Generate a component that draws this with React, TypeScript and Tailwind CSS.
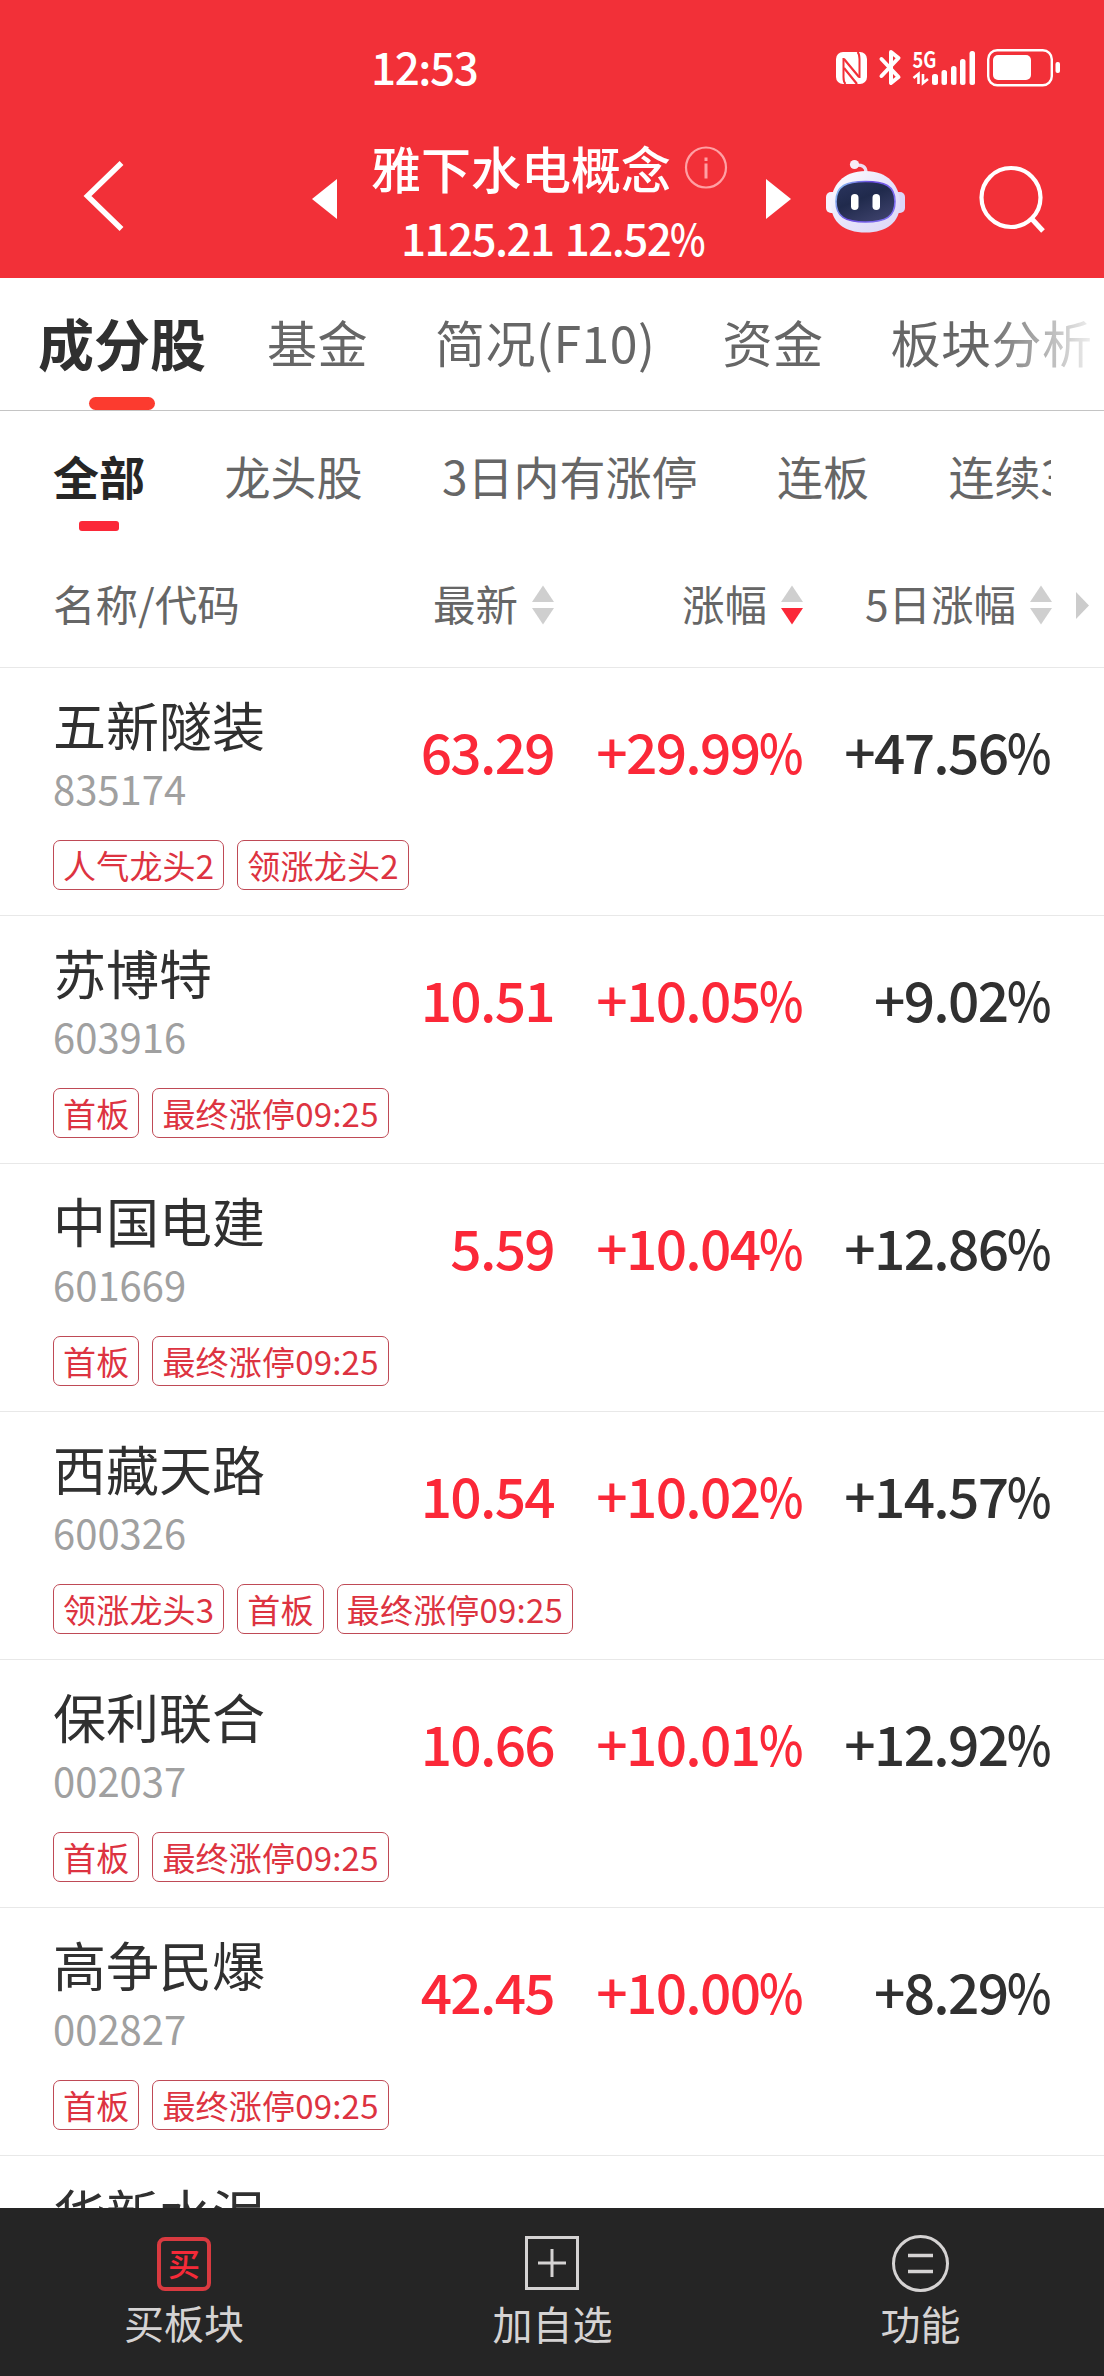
import clsx from "clsx";

type Stock = {
    name: string;
    code: string;
    price: string;
    change: string;
    change5: string;
    tags: string[];
};

const stocks: Stock[] = [
    { name: "五新隧装", code: "835174", price: "63.29", change: "+29.99%", change5: "+47.56%", tags: ["人气龙头2", "领涨龙头2"] },
    { name: "苏博特", code: "603916", price: "10.51", change: "+10.05%", change5: "+9.02%", tags: ["首板", "最终涨停09:25"] },
    { name: "中国电建", code: "601669", price: "5.59", change: "+10.04%", change5: "+12.86%", tags: ["首板", "最终涨停09:25"] },
    { name: "西藏天路", code: "600326", price: "10.54", change: "+10.02%", change5: "+14.57%", tags: ["领涨龙头3", "首板", "最终涨停09:25"] },
    { name: "保利联合", code: "002037", price: "10.66", change: "+10.01%", change5: "+12.92%", tags: ["首板", "最终涨停09:25"] },
    { name: "高争民爆", code: "002827", price: "42.45", change: "+10.00%", change5: "+8.29%", tags: ["首板", "最终涨停09:25"] },
    { name: "华新水泥", code: "", price: "", change: "", change5: "", tags: [] },
];

const tabs = ["基金", "简况(F10)", "资金", "板块分析"];
const filters = ["龙头股", "3日内有涨停", "连板", "连续3日"];

// the percent sign is drawn narrower than the font's own
function Num({ value }: { value: string }) {
    const percent = value.endsWith("%");
    return (
        <span className="whitespace-nowrap">
            {percent ? value.slice(0, -1) : value}
            {percent && <span className="inline-block origin-left scale-x-[0.86] mr-[-0.15em]">%</span>}
        </span>
    );
}

function StatusIcons() {
    return (
        <svg width="228" height="40" viewBox="834 48 228 40" fill="none">
            <rect x="836" y="52" width="31" height="32" rx="7" fill="white" />
            <path d="M843.500 58v19q0 5 2 7M859.500 78V59q0-5-2-7" stroke="#f23038" strokeWidth="2" />
            <path d="M844 59l15 18M844 68l13 16" stroke="#f23038" strokeWidth="2.200" />
            <path d="M881.500 59l17 18-7.500 6V52l7.500 6-17 18" stroke="white" strokeWidth="4" strokeLinejoin="round" strokeLinecap="round" />
            <path d="M913.500 78l5-4v10M928 79l-5 4V74" stroke="white" strokeWidth="2.600" />
            <rect x="932" y="74" width="6" height="11" rx="2.500" fill="white" />
            <rect x="941.500" y="70" width="5.500" height="15" rx="2.500" fill="white" />
            <rect x="951" y="66" width="5.500" height="19" rx="2.500" fill="white" />
            <rect x="960" y="59" width="5.500" height="26" rx="2.500" fill="white" />
            <rect x="969.500" y="51" width="5.500" height="34" rx="2.500" fill="white" />
            <rect x="988.200" y="50.200" width="63.600" height="35" rx="9" stroke="white" strokeWidth="2.400" />
            <rect x="993" y="55" width="38" height="25" rx="5" fill="white" />
            <rect x="1055.500" y="62" width="4.500" height="11" rx="2" fill="white" />
            <text x="912.500" y="67.500" fill="white" fontSize="22" fontWeight="700" textLength="24" lengthAdjust="spacingAndGlyphs">5G</text>
        </svg>
    );
}

function Robot() {
    return (
        <svg width="80" height="76" viewBox="826 159 80 76" fill="none">
            <defs>
                <linearGradient id="head" x1="0" y1="0" x2="1" y2="1">
                    <stop offset="0" stopColor="#ffffff" />
                    <stop offset="0.55" stopColor="#e6e2fa" />
                    <stop offset="1" stopColor="#dcd6f6" />
                </linearGradient>
                <linearGradient id="rim" x1="0" y1="0" x2="1" y2="0.4">
                    <stop offset="0" stopColor="#8fd3f5" />
                    <stop offset="0.5" stopColor="#6a4be0" />
                    <stop offset="1" stopColor="#7c6cf0" />
                </linearGradient>
                <linearGradient id="visor" x1="0" y1="0" x2="0.6" y2="1">
                    <stop offset="0" stopColor="#2b3560" />
                    <stop offset="0.5" stopColor="#202a4c" />
                    <stop offset="1" stopColor="#3a3f68" />
                </linearGradient>
            </defs>
            <path d="M854 165.500q12-2 12 7" stroke="#eedcf0" strokeWidth="3.200" />
            <circle cx="854.500" cy="164.500" r="4.600" fill="#f8ecf6" />
            <rect x="826" y="192" width="12" height="21" rx="5" fill="#f6f2fd" />
            <rect x="893" y="192" width="12" height="21" rx="5" fill="#dcd6f7" />
            <path d="M865.500 171c22 0 34.500 14 34.500 33 0 18-13 28.500-34.500 28.500S831 222 831 204c0-19 12.500-33 34.500-33z" fill="url(#head)" />
            <path d="M865.500 181.500c19 0 29.500 4 29.500 20 0 15-9 20.500-29.500 20.500S836 216.500 836 201.500c0-16 10.500-20 29.500-20z" fill="url(#visor)" stroke="url(#rim)" strokeWidth="1.600" />
            <rect x="851" y="194" width="7.500" height="16" rx="3.750" fill="white" />
            <rect x="872.500" y="194" width="7.500" height="16" rx="3.750" fill="white" />
        </svg>
    );
}

function SortArrows({ active }: { active?: boolean }) {
    return (
        <svg className="shrink-0" width="22" height="40" viewBox="0 0 22 40">
            <path d="M11 0.500L22 17H0z" fill="#cfcfcf" />
            <path d="M11 39.500L22 23H0z" fill={active ? "#fb2838" : "#cfcfcf"} />
        </svg>
    );
}

function Header() {
    return (
        <div className="h-[278px] shrink-0 bg-[#f23038] text-white font-medium">
            <div className="flex h-[136px] items-center justify-between pl-[371px] pr-[42px]">
                <span className="mb-[5px] text-[44px] leading-[44px] tracking-[-1.4px]">12:53</span>
                <StatusIcons />
            </div>
            <div className="flex h-[142px] items-start">
                <svg className="ml-[80px] mt-[20px]" width="50" height="80" viewBox="80 156 50 80" fill="none">
                    <path d="M121.500 163L87.500 196l34 33" stroke="white" strokeWidth="5.500" />
                </svg>
                <svg className="ml-[182px] mt-[43px]" width="25" height="40" viewBox="0 0 25 40">
                    <path d="M25 0v40L0 20z" fill="white" />
                </svg>
                <div className="ml-[34px] w-[362px] shrink-0 pt-[5px]">
                    <div className="flex items-center">
                        <span className="text-[50px] leading-[52px] whitespace-nowrap">雅下水电概念</span>
                        <svg className="ml-[13px]" width="44" height="44" viewBox="0 0 44 44" fill="none" stroke="#ffa0a4">
                            <circle cx="22" cy="22.500" r="20" strokeWidth="2.200" />
                            <path d="M22 18.500v15M22 12.500v3.500" strokeWidth="3" />
                        </svg>
                    </div>
                    <div className="mt-[22px] pl-[30px] text-[44px] leading-[44px] tracking-[-1.6px] [word-spacing:3px]">
                        <Num value="1125.21 12.52%" />
                    </div>
                </div>
                <svg className="ml-[33px] mt-[43px]" width="25" height="40" viewBox="0 0 25 40">
                    <path d="M0 0v40l25-20z" fill="white" />
                </svg>
                <div className="ml-[35px] mt-[23px]">
                    <Robot />
                </div>
                <svg className="ml-[70px] mt-[26px]" width="74" height="74" viewBox="976 162 74 74" fill="none" stroke="white">
                    <circle cx="1011" cy="197.500" r="29.500" strokeWidth="4.200" />
                    <path d="M1031 218l12 13" strokeWidth="5" />
                </svg>
            </div>
        </div>
    );
}

function Tabs() {
    return (
        <div className="relative flex h-[133px] shrink-0 items-end overflow-hidden border-b border-[#c4c4c4] pl-[38px]">
            <div className="flex h-full flex-col items-center justify-end">
                <span className="text-[56px] leading-[56px] font-bold text-[#303030] whitespace-nowrap">成分股</span>
                <span className="mt-[27px] h-[13px] w-[66px] rounded-full bg-[#fc3b2f]"></span>
            </div>
            <div className="ml-[61px] flex gap-[67px] pb-[44px]">
                {tabs.map((tab) => (
                    <span key={tab} className="text-[50px] leading-[50px] tracking-[0.5px] text-[#666] whitespace-nowrap">{tab}</span>
                ))}
            </div>
            <div className="absolute right-0 top-0 h-[130px] w-[120px] bg-linear-to-r from-white/0 to-white"></div>
        </div>
    );
}

function Filters() {
    return (
        <div className="mr-[53px] flex h-[132px] shrink-0 overflow-hidden pl-[53px] pt-[41px] text-[46px] leading-[46px]">
            <div className="flex shrink-0 flex-col items-center">
                <span className="font-bold text-[#262626]">全部</span>
                <span className="mt-[23px] h-[10px] w-[40px] rounded-[3px] bg-[#fb2838]"></span>
            </div>
            {filters.map((filter) => (
                <span key={filter} className="ml-[79.5px] shrink-0 text-[#666]">{filter}</span>
            ))}
        </div>
    );
}

function TableHead() {
    return (
        <div className="flex h-[125px] shrink-0 items-center border-b border-[#e8e8e8] pl-[53px] text-[42.5px] leading-[42px] text-[#666]">
            <span className="mb-[5px] w-[248px]">名称/代码</span>
            <div className="flex w-[253px] items-center justify-end gap-[14px]">
                <span className="mb-[5px]">最新</span><SortArrows />
            </div>
            <div className="flex w-[249px] items-center justify-end gap-[14px]">
                <span className="mb-[5px]">涨幅</span><SortArrows active />
            </div>
            <div className="flex w-[249px] items-center justify-end gap-[14px]">
                <span className="mb-[5px]">5日涨幅</span><SortArrows />
            </div>
            <svg className="ml-[24px]" width="13" height="27" viewBox="0 0 13 27">
                <path d="M0 0v27l13-13.500z" fill="#ccc" />
            </svg>
        </div>
    );
}

function Row({ stock }: { stock: Stock }) {
    return (
        <div className="h-[248px] shrink-0 border-b border-[#e8e8e8] pl-[53px] pt-[29px]">
            <div className="flex">
                <div className="w-[247px]">
                    <p className="text-[53px] leading-[54px] text-[#303030]">{stock.name}</p>
                    <p className="mt-[17px] text-[40px] leading-[40px] text-[#a0a0a0]">{stock.code}</p>
                </div>
                <div className="flex pt-[26px] text-right text-[55px] leading-[55px] font-medium tracking-[-1.7px]">
                    <p className="w-[254px] text-[#fb2838]"><Num value={stock.price} /></p>
                    <p className="w-[247px] text-[#fb2838]"><Num value={stock.change} /></p>
                    <p className="w-[248px] text-[#303030]"><Num value={stock.change5} /></p>
                </div>
            </div>
            <div className="mt-[32px] flex gap-[13px]">
                {stock.tags.map((tag) => (
                    <span key={tag} className="h-[50px] rounded-[7px] border border-[#bf4a56] px-[9px] text-[33px] leading-[48px] tracking-[0.2px] text-[#dd3341]">{tag}</span>
                ))}
            </div>
        </div>
    );
}

function BottomBar() {
    const item = "flex w-[368px] flex-col items-center text-[40px] leading-[40px]";
    return (
        <div className="flex h-[168px] shrink-0 bg-[#252525] text-[#d5d3d3]">
            <div className={clsx(item, "pt-[29px]")}>
                <div className="flex size-[54px] items-center justify-center rounded-[8px] border-4 border-[#d93a40] text-[32px] leading-[30px] font-medium text-[#f52a38]">
                    <span className="mb-[4px]">买</span>
                </div>
                <span className="mt-[11px]">买板块</span>
            </div>
            <div className={clsx(item, "pt-[28px]")}>
                <svg width="54" height="54" viewBox="0 0 54 54" fill="none" stroke="#d5d3d3" strokeWidth="3">
                    <rect x="1.500" y="1.500" width="51" height="51" />
                    <path d="M13 27h28M27 13v28" />
                </svg>
                <span className="mt-[13px] ml-[1px]">加自选</span>
            </div>
            <div className={clsx(item, "pt-[27px]")}>
                <svg width="57" height="57" viewBox="0 0 57 57" fill="none" stroke="#d5d3d3" strokeWidth="3">
                    <circle cx="28.500" cy="28.500" r="27" />
                    <path d="M16 20.500h25M16 36.500h25" strokeWidth="3.500" />
                </svg>
                <span className="mt-[11px] ml-[1px]">功能</span>
            </div>
        </div>
    );
}

export default function App() {
    return (
        <div className="flex h-[2376px] w-[1104px] flex-col overflow-hidden bg-white font-['Noto_Sans_CJK_SC',sans-serif]">
            <Header />
            <Tabs />
            <Filters />
            <TableHead />
            <div className="flex min-h-0 flex-1 flex-col overflow-hidden">
                {stocks.map((stock) => (
                    <Row key={stock.name} stock={stock} />
                ))}
            </div>
            <BottomBar />
        </div>
    );
}
